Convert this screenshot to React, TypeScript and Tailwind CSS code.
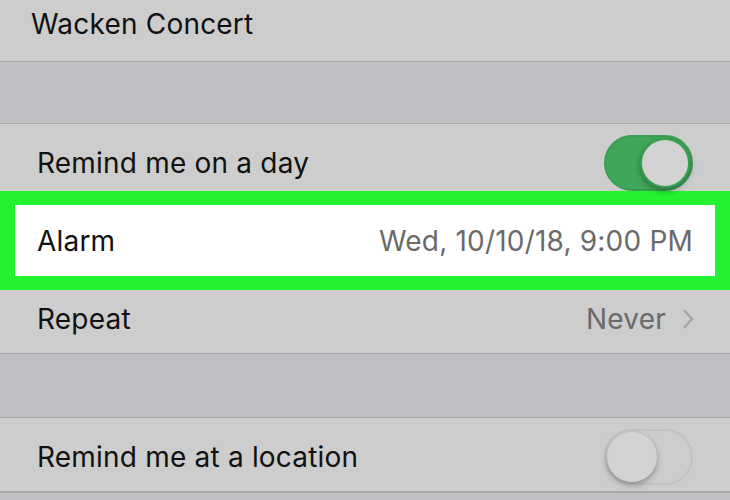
import React from "react";

function Toggle({ on }: { on: boolean }) {
  return (
    <div
      className={
        "relative h-[56px] w-[89px] shrink-0 rounded-full border-2 " +
        (on ? "border-[#3a9e52] bg-[#40a659]" : "border-[#c2c2c2] bg-[#cdcdcd]")
      }
    >
      <div
        className={
          "absolute top-[1px] h-[50px] w-[50px] rounded-full bg-[#d3d3d3] shadow-[0_3px_6px_rgba(0,0,0,0.3)] " +
          (on ? "right-[1px] border-2 border-[#3a9e52]" : "left-[1px]")
        }
      />
    </div>
  );
}

export default function App() {
  return (
    <div
      className="h-[500px] w-[730px] overflow-hidden bg-[#c0bfc3] text-[28px] tracking-[0.2px] text-[#111]"
      style={{ fontFamily: "Inter, 'Noto Sans', sans-serif" }}
    >
      {/* title row */}
      <div className="flex h-[62px] items-start border-b border-[#a9a9ab] bg-[#cdcdcd] pl-[31px] pt-[3px]">
        Wacken Concert
      </div>

      {/* section gap */}
      <div className="h-[62px] border-b border-[#a9a9ab]" />

      <div className="bg-[#cdcdcd]">
        <div className="flex h-[67px] items-center justify-between pl-[37px] pr-[37px] pt-[10px]">
          <span>Remind me on a day</span>
          <Toggle on />
        </div>

        {/* highlighted alarm row */}
        <div className="bg-[#22f22f] px-[15px] py-[14px]">
          <div className="flex h-[71px] items-center justify-between bg-white pl-[22px] pr-[22px]">
            <span>Alarm</span>
            <span className="text-[#6a6a6a]">Wed, 10/10/18, 9:00 PM</span>
          </div>
        </div>

        <div className="flex h-[64px] items-center justify-between border-b border-[#a9a9ab] pl-[37px] pr-[36px] pb-[6px]">
          <span>Repeat</span>
          <span className="flex items-center gap-[16px] text-[#6a6a6a]">
            Never
            <svg width="12" height="22" viewBox="0 0 12 22" fill="none">
              <path d="M2 2l8 9-8 9" stroke="#a3a3a3" strokeWidth="2.2" />
            </svg>
          </span>
        </div>
      </div>

      {/* section gap */}
      <div className="h-[64px] border-b border-[#a9a9ab]" />

      <div className="flex h-[75px] items-center justify-between border-b-2 border-[#a9a9ab] bg-[#cdcdcd] pl-[37px] pr-[37px] pt-[4px]">
        <span>Remind me at a location</span>
        <Toggle on={false} />
      </div>
    </div>
  );
}
